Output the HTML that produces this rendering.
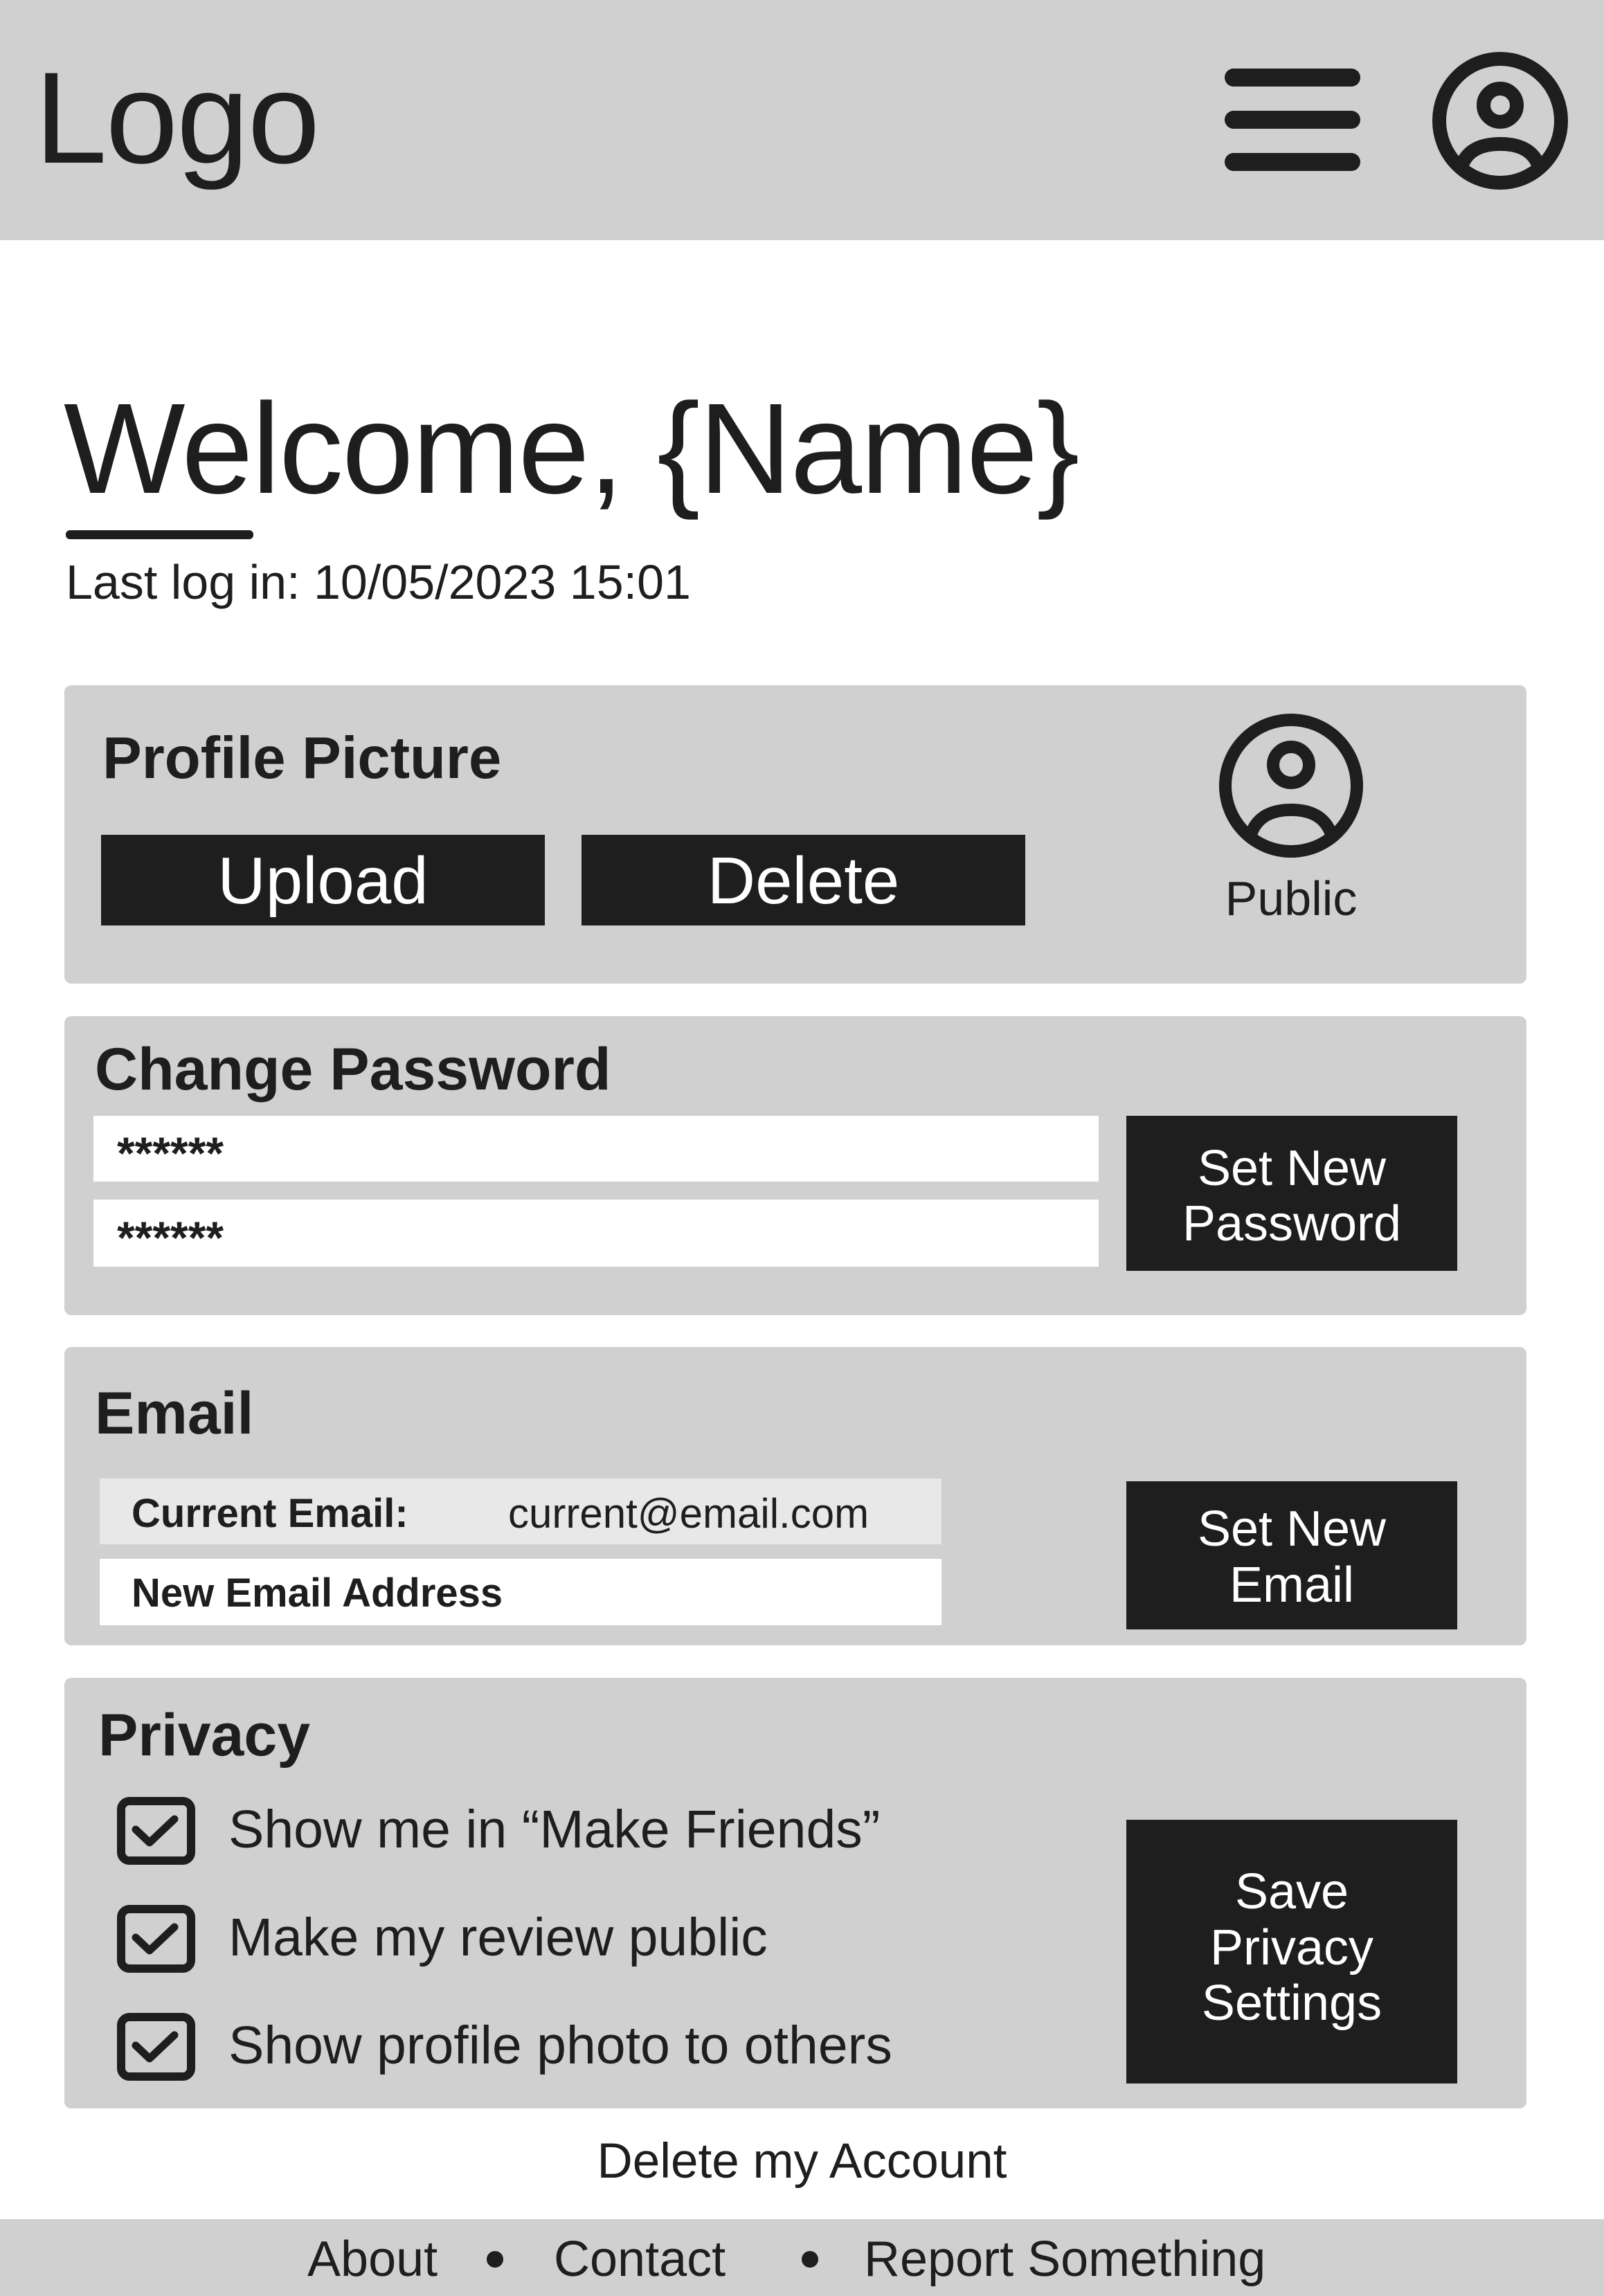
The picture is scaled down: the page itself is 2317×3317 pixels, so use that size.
<!DOCTYPE html>
<html><head><meta charset="utf-8"><style>
*{margin:0;padding:0;box-sizing:border-box}
body{width:2317px;height:3317px;background:#fff;position:relative;overflow:hidden;font-family:"Liberation Sans",Arial,sans-serif;color:#1e1e1e}
.a{position:absolute;line-height:1;white-space:nowrap}
.g{position:absolute;background:#d0d0d0}
.card{position:absolute;background:#d0d0d0;border-radius:10px;left:93px;width:2112px}
.btn{position:absolute;background:#1e1e1e;color:#fff}
.b{font-weight:bold}
.w{position:absolute;background:#fff}
</style></head><body>
<div class="g" style="left:0;top:0;width:2317px;height:347px"></div>
<div class="a" style="left:50px;top:76px;font-size:188px;letter-spacing:-2px">Logo</div>
<svg class="a" style="left:1769px;top:99px" width="196" height="148"><g stroke="#1e1e1e" stroke-width="26" stroke-linecap="round"><line x1="13" y1="13" x2="183" y2="13"/><line x1="13" y1="74" x2="183" y2="74"/><line x1="13" y1="135" x2="183" y2="135"/></g></svg>
<svg class="a" style="left:2069px;top:75px" width="196" height="199" viewBox="0 0 196 199"><g fill="none" stroke="#1e1e1e" stroke-width="20"><ellipse cx="98" cy="99.5" rx="88" ry="89.5"/><circle cx="98" cy="77" r="24"/><path d="M40 173 Q48 133 98 133 Q148 133 156 173"/></g></svg>

<div class="a" style="left:92px;top:556px;font-size:186px;letter-spacing:-2px">Welcome, {Name}</div>
<div class="a" style="left:95px;top:766px;width:271px;height:13px;background:#1e1e1e;border-radius:6px"></div>
<div class="a" style="left:95px;top:806px;font-size:70px">Last log in: 10/05/2023 15:01</div>

<div class="card" style="top:990px;height:431px"></div>
<div class="a b" style="left:148px;top:1053px;font-size:85px">Profile Picture</div>
<div class="btn" style="left:146px;top:1206px;width:641px;height:131px"></div>
<div class="a" style="left:146px;top:1225px;width:641px;text-align:center;font-size:96px;color:#fff">Upload</div>
<div class="btn" style="left:840px;top:1206px;width:641px;height:131px"></div>
<div class="a" style="left:840px;top:1225px;width:641px;text-align:center;font-size:96px;color:#fff">Delete</div>
<svg class="a" style="left:1760px;top:1030px" width="210" height="210" viewBox="0 0 210 210"><g fill="none" stroke="#1e1e1e" stroke-width="18"><circle cx="105" cy="105" r="95"/><circle cx="105" cy="75" r="26"/><path d="M45 182 Q55 140 105 140 Q155 140 165 182"/></g></svg>
<div class="a" style="left:1665px;top:1263px;width:400px;text-align:center;font-size:70px">Public</div>

<div class="card" style="top:1468px;height:432px"></div>
<div class="a b" style="left:137px;top:1502px;font-size:86px">Change Password</div>
<div class="w" style="left:135px;top:1612px;width:1452px;height:95px"></div>
<div class="a b" style="left:169px;top:1633px;font-size:66px">******</div>
<div class="w" style="left:135px;top:1733px;width:1452px;height:97px"></div>
<div class="a b" style="left:169px;top:1755px;font-size:66px">******</div>
<div class="btn" style="left:1627px;top:1612px;width:478px;height:224px"></div>
<div class="a" style="left:1627px;top:1648px;width:478px;text-align:center;font-size:72px;line-height:80px;color:#fff;white-space:normal">Set New<br>Password</div>

<div class="card" style="top:1946px;height:431px"></div>
<div class="a b" style="left:137px;top:1999px;font-size:86px">Email</div>
<div class="a" style="left:144px;top:2136px;width:1216px;height:95px;background:#e8e8e8"></div>
<div class="a" style="left:190px;top:2158px;font-size:58px;font-weight:bold">Current Email:</div>
<div class="a" style="left:734px;top:2157px;font-size:60px">current@email.com</div>
<div class="w" style="left:144px;top:2252px;width:1216px;height:96px"></div>
<div class="a" style="left:190px;top:2273px;font-size:58px;font-weight:bold">New Email Address</div>
<div class="btn" style="left:1627px;top:2140px;width:478px;height:214px"></div>
<div class="a" style="left:1627px;top:2169px;width:478px;text-align:center;font-size:72px;line-height:81px;color:#fff;white-space:normal">Set New<br>Email</div>

<div class="card" style="top:2424px;height:622px"></div>
<div class="a b" style="left:142px;top:2464px;font-size:86px">Privacy</div>
<svg class="a" style="left:169px;top:2596px" width="113" height="98"><rect x="6" y="6" width="101" height="86" rx="12" fill="none" stroke="#1e1e1e" stroke-width="12"/><path d="M27 47 L47 66 L83 32" fill="none" stroke="#1e1e1e" stroke-width="11" stroke-linecap="round" stroke-linejoin="round"/></svg>
<svg class="a" style="left:169px;top:2752px" width="113" height="98"><rect x="6" y="6" width="101" height="86" rx="12" fill="none" stroke="#1e1e1e" stroke-width="12"/><path d="M27 47 L47 66 L83 32" fill="none" stroke="#1e1e1e" stroke-width="11" stroke-linecap="round" stroke-linejoin="round"/></svg>
<svg class="a" style="left:169px;top:2908px" width="113" height="98"><rect x="6" y="6" width="101" height="86" rx="12" fill="none" stroke="#1e1e1e" stroke-width="12"/><path d="M27 47 L47 66 L83 32" fill="none" stroke="#1e1e1e" stroke-width="11" stroke-linecap="round" stroke-linejoin="round"/></svg>
<div class="a" style="left:330px;top:2605px;font-size:77px">Show me in “Make Friends”</div>
<div class="a" style="left:330px;top:2761px;font-size:77px">Make my review public</div>
<div class="a" style="left:330px;top:2917px;font-size:77px">Show profile photo to others</div>
<div class="btn" style="left:1627px;top:2629px;width:478px;height:381px"></div>
<div class="a" style="left:1627px;top:2693px;width:478px;text-align:center;font-size:72px;line-height:80.5px;color:#fff;white-space:normal">Save<br>Privacy<br>Settings</div>

<div class="a" style="left:0;top:3087px;width:2317px;text-align:center;font-size:71px">Delete my Account</div>
<div class="g" style="left:0;top:3206px;width:2317px;height:111px"></div>
<div class="a" style="left:444px;top:3228px;font-size:72px">About</div>
<div class="a" style="left:703px;top:3252px;width:24px;height:24px;border-radius:50%;background:#1e1e1e"></div>
<div class="a" style="left:800px;top:3228px;font-size:72px">Contact</div>
<div class="a" style="left:1158px;top:3252px;width:24px;height:24px;border-radius:50%;background:#1e1e1e"></div>
<div class="a" style="left:1248px;top:3228px;font-size:72px">Report Something</div>
</body></html>
